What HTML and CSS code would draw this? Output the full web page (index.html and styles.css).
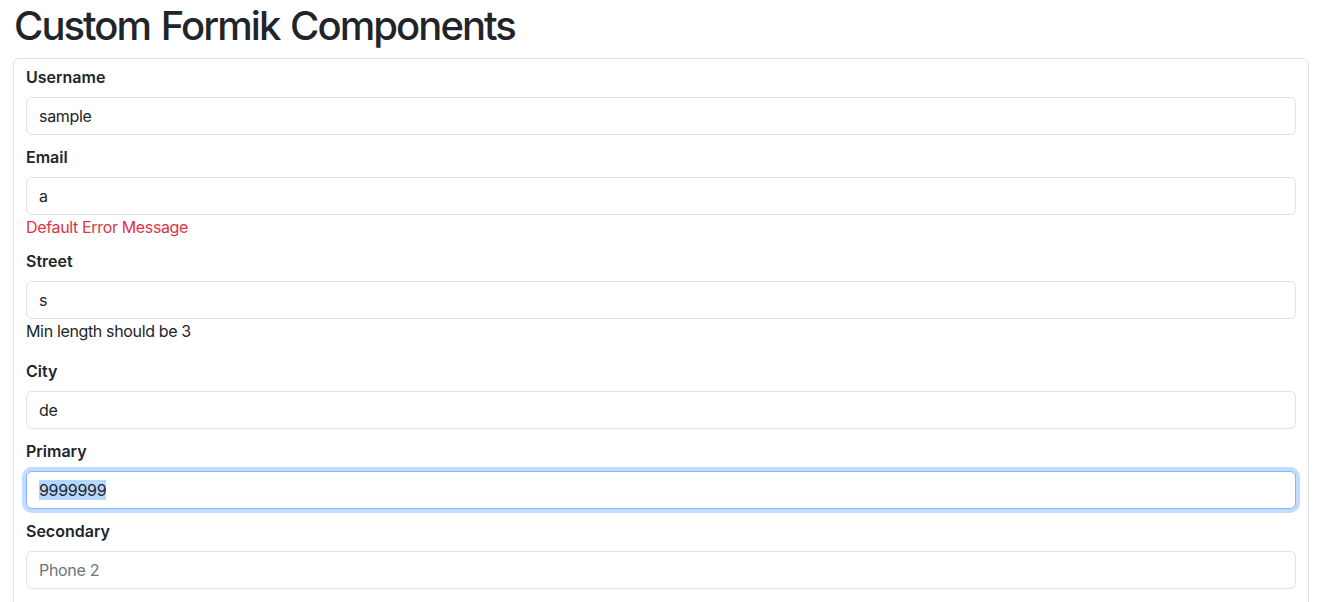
FILE: index.html
```html
<!DOCTYPE html>
<html lang="en">
<head>
<meta charset="utf-8">
<title>Custom Formik Components</title>
<link rel="stylesheet" href="styles.css">
</head>
<body>
<div class="page">
  <h1 class="title">Custom Formik Components</h1>
  <form class="card">
    <div class="group">
      <label class="label" for="username">Username</label>
      <input class="control" id="username" type="text" value="sample">
    </div>
    <div class="group">
      <label class="label" for="email">Email</label>
      <input class="control" id="email" type="text" value="a">
      <div class="error">Default Error Message</div>
    </div>
    <div class="group">
      <label class="label" for="street">Street</label>
      <input class="control" id="street" type="text" value="s">
      <div class="hint">Min length should be 3</div>
    </div>
    <div class="group">
      <label class="label" for="city">City</label>
      <input class="control" id="city" type="text" value="de">
    </div>
    <div class="group">
      <label class="label" for="primary">Primary</label>
      <input class="control focused" id="primary" type="text" value="9999999">
    </div>
    <div class="group">
      <label class="label" for="secondary">Secondary</label>
      <input class="control" id="secondary" type="text" placeholder="Phone 2">
    </div>
  </form>
</div>
<script src="script.js"></script>
</body>
</html>
```

FILE: styles.css
```css
* { box-sizing: border-box; }
html, body { margin: 0; padding: 0; background: #fff; }
body {
  font-family: Inter, "Noto Sans", "Liberation Sans", sans-serif;
  font-size: 16px;
  line-height: 24px;
  color: #212529;
}
.page {
  padding: 0 23px 0 13px;
}
.title {
  margin: 0 0 8px 0;
  padding: 2px 0 0 1px;
  font-size: 40px;
  line-height: 48px;
  font-weight: 500;
  letter-spacing: -1.95px;
  word-spacing: 2px;
}
.card {
  display: block;
  border: 1px solid #dee2e6;
  border-radius: 6px;
  padding: 6px 12px 10px;
  margin: 0;
}
.group {
  display: flex;
  flex-direction: column;
  margin-bottom: 10px;
}
.label {
  font-weight: 600;
  margin-bottom: 8px;
}
.control {
  display: block;
  width: 100%;
  height: 38px;
  padding: 6px 12px;
  font: inherit;
  letter-spacing: -0.3px;
  color: #212529;
  background: #fff;
  border: 1px solid #dee2e6;
  border-radius: 6px;
  outline: none;
}
.control::placeholder { color: #6c757d; opacity: 1; }
.control::selection { background: #b3d7fe; color: #212529; }
.control.focused {
  border-color: #86b7fe;
  box-shadow: 0 0 0 4px rgba(13, 110, 253, 0.25);
}
.error {
  color: #dc3545;
  letter-spacing: -0.35px;
}
.hint {
  margin-bottom: 6px;
  letter-spacing: -0.35px;
}
```

FILE: script.js
```js
var el = document.getElementById('primary');
el.focus();
el.select();
```
